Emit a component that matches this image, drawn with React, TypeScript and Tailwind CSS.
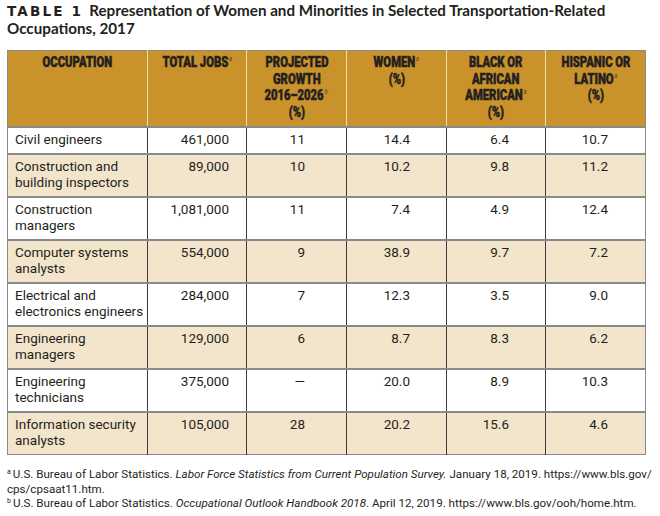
import React from "react";

type Row = {
  occ: React.ReactNode;
  jobs: string;
  growth: string;
  women: string;
  black: string;
  hisp: string;
  alt: boolean;
  tall: boolean;
};

const rows: Row[] = [
  { occ: "Civil engineers", jobs: "461,000", growth: "11", women: "14.4", black: "6.4", hisp: "10.7", alt: false, tall: false },
  { occ: <>Construction and<br />building inspectors</>, jobs: "89,000", growth: "10", women: "10.2", black: "9.8", hisp: "11.2", alt: true, tall: true },
  { occ: <>Construction<br />managers</>, jobs: "1,081,000", growth: "11", women: "7.4", black: "4.9", hisp: "12.4", alt: false, tall: true },
  { occ: <>Computer systems<br />analysts</>, jobs: "554,000", growth: "9", women: "38.9", black: "9.7", hisp: "7.2", alt: true, tall: true },
  { occ: <>Electrical and<br />electronics engineers</>, jobs: "284,000", growth: "7", women: "12.3", black: "3.5", hisp: "9.0", alt: false, tall: true },
  { occ: <>Engineering<br />managers</>, jobs: "129,000", growth: "6", women: "8.7", black: "8.3", hisp: "6.2", alt: true, tall: true },
  { occ: <>Engineering<br />technicians</>, jobs: "375,000", growth: "\u2014", women: "20.0", black: "8.9", hisp: "10.3", alt: false, tall: true },
  { occ: <>Information security<br />analysts</>, jobs: "105,000", growth: "28", women: "20.2", black: "15.6", hisp: "4.6", alt: true, tall: true },
];

const Sup = ({ c }: { c: string }) => (
  <span className="text-[8px] leading-none font-normal italic text-[#5a4520] align-[6px] ml-[1px] [-webkit-text-stroke:0px]">{c}</span>
);

const H = ({ children }: { children: React.ReactNode }) => (
  <span className="inline-block scale-x-[0.75] origin-center whitespace-nowrap">{children}</span>
);

export default function App() {
  return (
    <div className="w-[660px] h-[516px] bg-white pl-[7px] pt-[2px] font-['Roboto',sans-serif] text-[#231f20]">
      <div className="leading-[16.5px] text-[15.2px] whitespace-nowrap">
        <span className="font-['DejaVu_Sans',sans-serif] font-black tracking-[2.2px] text-[13.5px] mr-[6px]">TABLE 1</span>
        <span className="font-['Lato',sans-serif] font-bold">Representation of Women and Minorities in Selected Transportation-Related</span>
        <br />
        <span className="font-['Lato',sans-serif] font-bold">Occupations, 2017</span>
      </div>

      <table className="mt-[13px] w-[638px] border-collapse table-fixed border border-[#8a8a8a]">
        <colgroup>
          <col className="w-[140px]" />
          <col className="w-[99px]" />
          <col className="w-[100px]" />
          <col className="w-[100px]" />
          <col className="w-[99px]" />
          <col className="w-[100px]" />
        </colgroup>
        <thead>
          <tr className="h-[76px] bg-[#c9922b] text-[15px] leading-[16.5px] font-black text-[#231f20] [-webkit-text-stroke:0.5px_#231f20]">
            <th className="align-top pt-[3px] text-center font-black border-r border-[#f3dcae]"><H>OCCUPATION</H></th>
            <th className="align-top pt-[3px] text-center font-black border-r border-[#f3dcae]"><H>TOTAL JOBS<Sup c="a" /></H></th>
            <th className="align-top pt-[3px] text-center font-black border-r border-[#f3dcae]">
              <H>PROJECTED</H><br /><H>GROWTH</H><br /><H>2016–2026<Sup c="b" /></H><br /><H>(%)</H>
            </th>
            <th className="align-top pt-[3px] text-center font-black border-r border-[#f3dcae]">
              <H>WOMEN<Sup c="a" /></H><br /><H>(%)</H>
            </th>
            <th className="align-top pt-[3px] text-center font-black border-r border-[#f3dcae]">
              <H>BLACK OR</H><br /><H>AFRICAN</H><br /><H>AMERICAN<Sup c="a" /></H><br /><H>(%)</H>
            </th>
            <th className="align-top pt-[3px] text-center font-black">
              <H>HISPANIC OR</H><br /><H>LATINO<Sup c="a" /></H><br /><H>(%)</H>
            </th>
          </tr>
        </thead>
        <tbody className="text-[13.5px] leading-[16.5px] tabular-nums">
          {rows.map((r, i) => (
            <tr key={i} className={`${r.tall ? "h-[43px]" : "h-[27px]"} ${r.alt ? "bg-[#f3e5cc]" : "bg-white"} border-t-2 border-[#8a8a8a]`}>
              <td className="align-top pt-[3px] pl-[7px] whitespace-nowrap border-r border-[#3a3a3a]">{r.occ}</td>
              <td className="align-top pt-[3px] pr-[17px] text-right border-r border-[#3a3a3a]">{r.jobs}</td>
              <td className="align-top pt-[3px] pr-[41px] text-right border-r border-[#3a3a3a]">{r.growth}</td>
              <td className="align-top pt-[3px] pr-[36px] text-right border-r border-[#3a3a3a]">{r.women}</td>
              <td className="align-top pt-[3px] pr-[36px] text-right border-r border-[#3a3a3a]">{r.black}</td>
              <td className="align-top pt-[3px] pr-[37px] text-right">{r.hisp}</td>
            </tr>
          ))}
        </tbody>
      </table>

      <div className="mt-[12px] text-[11.6px] leading-[14.5px] whitespace-nowrap">
        <div>
          <span className="text-[7px] leading-none align-[4px] mr-[2px]">a</span>U.S. Bureau of Labor Statistics. <i>Labor Force Statistics from Current Population Survey.</i> January 18, 2019. https://www.bls.gov/
          <br />
          cps/cpsaat11.htm.
        </div>
        <div>
          <span className="text-[7px] leading-none align-[4px] mr-[2px]">b</span>U.S. Bureau of Labor Statistics. <i>Occupational Outlook Handbook 2018</i>. April 12, 2019. https://www.bls.gov/ooh/home.htm.
        </div>
      </div>
    </div>
  );
}
